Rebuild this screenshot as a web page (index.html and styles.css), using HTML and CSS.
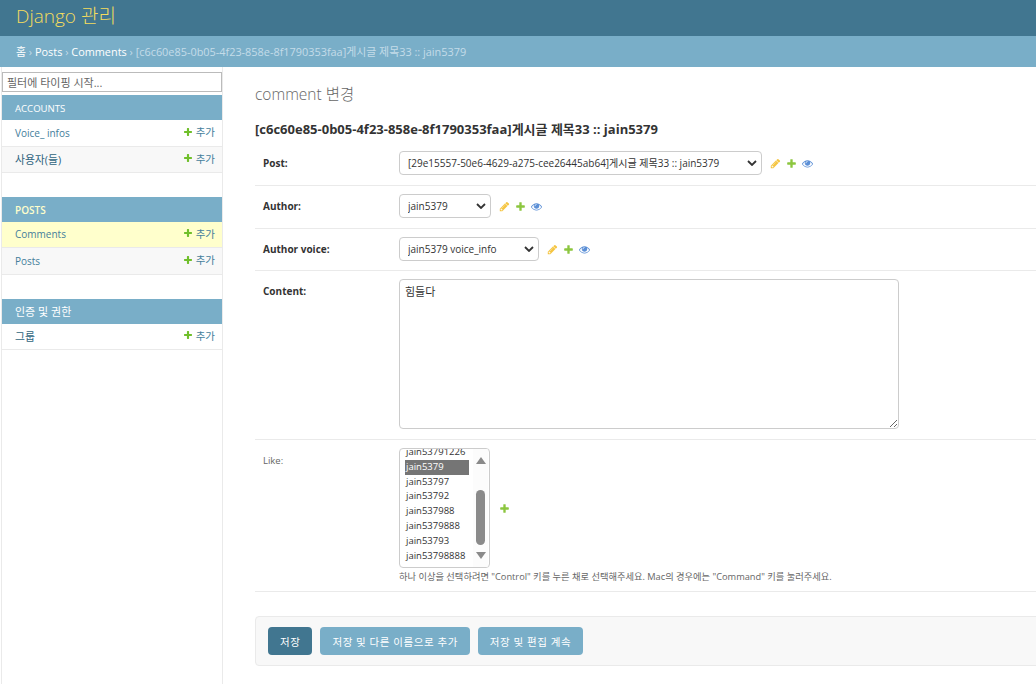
FILE: index.html
```html
<!DOCTYPE html>
<html lang="ko">
<head>
<meta charset="utf-8">
<title>comment 변경 | Django 관리</title>
<link rel="stylesheet" href="styles.css">
</head>
<body>
<svg class="sprites" aria-hidden="true">
<symbol id="i-change" viewBox="0 0 1792 1792"><path d="M491 1536l91-91-235-235-91 91v107h128v128h107zm523-928q0-22-22-22-10 0-17 7l-542 542q-7 7-7 17 0 22 22 22 10 0 17-7l542-542q7-7 7-17zm-54-192l416 416-832 832h-416v-416zm683 96q0 53-37 90l-166 166-416-416 166-165q36-38 90-38 53 0 91 38l235 234q37 39 37 91z"/></symbol>
<symbol id="i-add" viewBox="0 0 1792 1792"><path d="M1600 796v192q0 40-28 68t-68 28h-416v416q0 40-28 68t-68 28h-192q-40 0-68-28t-28-68v-416h-416q-40 0-68-28t-28-68v-192q0-40 28-68t68-28h416v-416q0-40 28-68t68-28h192q40 0 68 28t28 68v416h416q40 0 68 28t28 68z"/></symbol>
<symbol id="i-view" viewBox="0 0 1792 1792"><path d="M1664 960q-152-236-381-353 61 104 61 225 0 185-131.500 316.500t-316.500 131.500-316.500-131.500-131.500-316.500q0-121 61-225-229 117-381 353 133 205 333.500 326.500t434.500 121.500 434.500-121.500 333.500-326.500zm-720-384q0-20-14-34t-34-14q-125 0-214.500 89.500t-89.500 214.500q0 20 14 34t34 14 34-14 14-34q0-86 61-147t147-61q20 0 34-14t14-34zm848 384q0 34-20 69-140 230-376.500 368.500t-499.500 138.500-499.500-139-376.500-368q-20-35-20-69t20-69q140-229 376.500-368t499.500-139 499.500 139 376.500 368q20 35 20 69z"/></symbol>
</svg>
<header class="topbar"><a class="brand" href="#">Django 관리</a></header>
<nav class="crumbs"><a href="#">홈</a> › <a href="#">Posts</a> › <a href="#">Comments</a> › <span class="crumb-current">[c6c60e85-0b05-4f23-858e-8f1790353faa]게시글 제목33 :: jain5379</span></nav>
<div class="shell">
  <aside class="sidebar">
    <input class="filter" type="text" placeholder="필터에 타이핑 시작...">
    <section class="app">
      <h3 class="app-title">ACCOUNTS</h3>
      <div class="model-row tall"><a href="#">Voice_ infos</a><a class="add" href="#"><svg class="icon-s"><use href="#i-add"/></svg>추가</a></div>
      <div class="model-row alt"><a href="#" class="ko">사용자(들)</a><a class="add" href="#"><svg class="icon-s"><use href="#i-add"/></svg>추가</a></div>
    </section>
    <section class="app">
      <h3 class="app-title current">POSTS</h3>
      <div class="model-row selected"><a href="#">Comments</a><a class="add" href="#"><svg class="icon-s"><use href="#i-add"/></svg>추가</a></div>
      <div class="model-row alt tall"><a href="#">Posts</a><a class="add" href="#"><svg class="icon-s"><use href="#i-add"/></svg>추가</a></div>
    </section>
    <section class="app">
      <h3 class="app-title ko-title">인증 및 권한</h3>
      <div class="model-row"><a href="#" class="ko">그룹</a><a class="add" href="#"><svg class="icon-s"><use href="#i-add"/></svg>추가</a></div>
    </section>
  </aside>
  <main class="content">
    <h1 class="page-title">comment 변경</h1>
    <h2 class="obj-title">[c6c60e85-0b05-4f23-858e-8f1790353faa]게시글 제목33 :: jain5379</h2>
    <form>
      <div class="form-row row-post">
        <label class="req">Post:</label>
        <div class="field">
          <select class="sel sel-post"><option>[29e15557-50e6-4629-a275-cee26445ab64]게시글 제목33 :: jain5379</option></select>
          <span class="rel"><svg class="icon change"><use href="#i-change"/></svg><svg class="icon plus"><use href="#i-add"/></svg><svg class="icon view"><use href="#i-view"/></svg></span>
        </div>
      </div>
      <div class="form-row row-author">
        <label class="req">Author:</label>
        <div class="field">
          <select class="sel sel-author"><option>jain5379</option></select>
          <span class="rel"><svg class="icon change"><use href="#i-change"/></svg><svg class="icon plus"><use href="#i-add"/></svg><svg class="icon view"><use href="#i-view"/></svg></span>
        </div>
      </div>
      <div class="form-row row-voice">
        <label class="req">Author voice:</label>
        <div class="field">
          <select class="sel sel-voice"><option>jain5379 voice_info</option></select>
          <span class="rel"><svg class="icon change"><use href="#i-change"/></svg><svg class="icon plus"><use href="#i-add"/></svg><svg class="icon view"><use href="#i-view"/></svg></span>
        </div>
      </div>
      <div class="form-row row-content">
        <label class="req">Content:</label>
        <textarea class="area">힘들다</textarea>
      </div>
      <div class="form-row row-like">
        <label>Like:</label>
        <div class="like-col">
          <div class="field">
            <div class="listbox">
              <ul class="list">
                <li class="clipped">jain53791226</li>
                <li class="on">jain5379</li>
                <li>jain53797</li>
                <li>jain53792</li>
                <li>jain537988</li>
                <li>jain5379888</li>
                <li>jain53793</li>
                <li>jain53798888</li>
              </ul>
              <div class="scroll">
                <span class="arrow up"></span>
                <span class="thumb"></span>
                <span class="arrow down"></span>
              </div>
            </div>
            <svg class="icon plus lone"><use href="#i-add"/></svg>
          </div>
          <p class="help">하나 이상을 선택하려면 "Control" 키를 누른 채로 선택해주세요. Mac의 경우에는 "Command" 키를 눌러주세요.</p>
        </div>
      </div>
      <div class="submit-row">
        <button class="btn primary" type="button">저장</button>
        <button class="btn" type="button">저장 및 다른 이름으로 추가</button>
        <button class="btn" type="button">저장 및 편집 계속</button>
      </div>
    </form>
  </main>
</div>
</body>
</html>
```
FILE: styles.css
```css
* { box-sizing: border-box; }
html, body { margin: 0; height: 684px; overflow: hidden; background: #fff; }
body { font-family: "Open Sans", "Noto Sans CJK KR", sans-serif; font-size: 10px; color: #333; }
a { color: inherit; text-decoration: none; }
.sprites { display: none; }
.topbar { height: 36px; background: #417690; padding: 3px 16px 0; }
.brand { font-size: 19px; line-height: 26px; font-weight: 300; color: #f5dd5d; }
.crumbs { height: 31px; background: #79aec8; padding: 0 16px; font-size: 10.9px; line-height: 31px; color: #c4dce8; white-space: nowrap; }
.crumbs a { color: #fff; }
.crumb-current { color: #c4dce8; }
.shell { display: flex; height: 617px; }
.sidebar { width: 222px; margin-left: 1px; padding: 5px 0 0; border-left: 1px solid #eaeaea; border-right: 1px solid #eaeaea; flex: none; }
.filter { display: block; width: 220px; height: 20px; margin-bottom: 3px; padding: 0 4px; border: 1px solid #bbb; border-radius: 0; font: 11px "Open Sans", "Noto Sans CJK KR", sans-serif; color: #333; }
.filter::placeholder { color: #666; opacity: 1; }
.app { margin-bottom: 24px; width: 220px; }
.app-title { margin: 0; height: 25px; padding: 0 13px; background: #79aec8; color: #fff; font-size: 9.6px; line-height: 27px; font-weight: 400; }
.app-title.current { color: #ffffcc; font-weight: 600; font-size: 10px; }
.app-title.ko-title { font-size: 11px; line-height: 25px; }
.model-row { display: flex; justify-content: space-between; align-items: center; height: 26px; padding: 0 7px 1px 13px; border-bottom: 1px solid #eaeaea; color: #447e9b; font-size: 10px; }
.model-row.tall { height: 27px; }
.model-row.alt { background: #f8f8f8; }
.model-row.selected { background: #ffffcc; }
.model-row .ko { font-size: 10.8px; color: #2f6480; }
.add { display: flex; align-items: center; gap: 3px; color: #447e9b; font-size: 10.5px; margin-top: -2px; }
.icon-s { width: 10px; height: 10px; fill: #70bf2b; }
.content { flex: 1; min-width: 0; padding: 13px 0 0 32px; }
.page-title { margin: 0 0 13px; font-size: 15.5px; line-height: 28px; font-weight: 300; color: #666; }
.obj-title { margin: 0 0 4px; font-size: 13px; line-height: 17px; font-weight: 700; color: #333; }
.form-row { display: flex; align-items: flex-start; padding: 0 8px; border-bottom: 1px solid #eaeaea; }
.form-row label { width: 136px; flex: none; color: #666; font-size: 9.5px; line-height: 24px; }
.form-row label.req { color: #333; font-size: 10px; font-weight: 700; }
.row-post { height: 44px; padding-top: 9px; }
.row-author { height: 43px; padding-top: 8px; }
.row-voice { height: 42px; padding-top: 8px; }
.row-content { height: 169px; padding-top: 8px; }
.row-like { height: 152px; padding-top: 8px; }
.row-like label { line-height: 26px; }
.field { display: flex; align-items: center; }
.sel { appearance: none; height: 24px; padding: 0 18px 0 8px; border: 1px solid #ccc; border-radius: 4px; background: #fff url("data:image/svg+xml,%3Csvg xmlns='http://www.w3.org/2000/svg' width='10' height='6' viewBox='0 0 10 6'%3E%3Cpath d='M1 1l4 4 4-4' fill='none' stroke='%23333' stroke-width='1.8'/%3E%3C/svg%3E") no-repeat right 4px center; color: #333; font: 10px "Open Sans", "Noto Sans CJK KR", sans-serif; }
.sel-post { width: 363px; }
.sel-author { width: 92px; }
.sel-voice { width: 140px; }
.rel { display: flex; align-items: center; gap: 5px; margin-left: 8px; }
.icon { width: 11px; height: 11px; flex: none; }
.change { fill: #f5c542; }
.plus { fill: #8cc63f; }
.view { fill: #5b8fd6; }
.area { display: block; width: 500px; height: 150px; padding: 3px 5px; border: 1px solid #ccc; border-radius: 4px; font: 11px "Open Sans", "Noto Sans CJK KR", sans-serif; color: #333; }
.listbox { display: flex; width: 91px; height: 120px; padding: 0 1px 0 5px; border: 1px solid #ccc; border-radius: 4px; overflow: hidden; }
.list { width: 64px; flex: none; margin: -4px 0 0; padding: 0; list-style: none; font-size: 9.5px; line-height: 14.8px; color: #333; white-space: nowrap; }
.list li { padding-left: 1px; }
.list li.on { background: #757575; color: #fff; }
.scroll { flex: 1; margin-left: 4px; display: flex; flex-direction: column; align-items: center; padding-top: 8px; background: #fcfcfc; }
.arrow { width: 0; height: 0; border-left: 5px solid transparent; border-right: 5px solid transparent; }
.arrow.up { border-bottom: 7px solid #8a8a8a; }
.arrow.down { border-top: 7px solid #8a8a8a; margin-top: 7px; }
.thumb { width: 9px; height: 55px; margin-top: 26px; border-radius: 5px; background: #8a8a8a; }
.lone { margin-left: 9px; }
.help { margin: 3px 0 0; font-size: 9.25px; line-height: 12px; color: #666; white-space: nowrap; }
.submit-row { display: flex; gap: 8px; margin-top: 24px; height: 50px; padding: 10px 12px; background: #f8f8f8; border: 1px solid #eaeaea; border-radius: 4px; margin-right: -8px; }
.btn { height: 28px; padding: 0 12px; border: 0; border-radius: 4px; background: #79aec8; color: #fff; font: 10.5px "Open Sans", "Noto Sans CJK KR", sans-serif; letter-spacing: 0.55px; white-space: nowrap; }
.btn.primary { background: #417690; }
```
